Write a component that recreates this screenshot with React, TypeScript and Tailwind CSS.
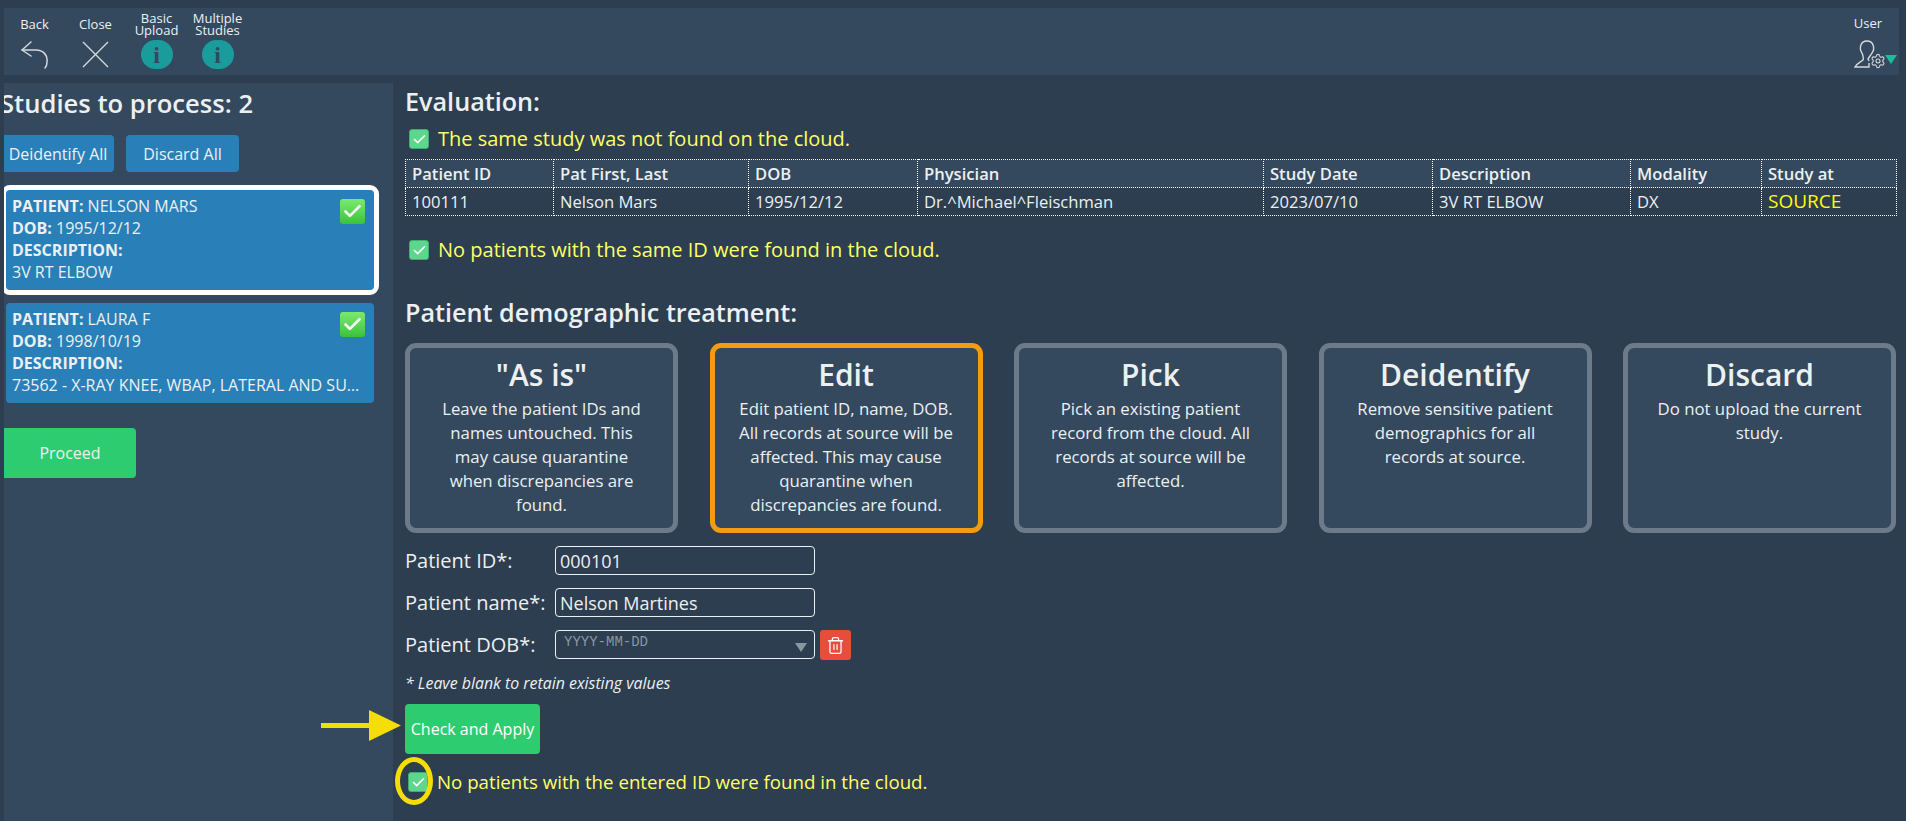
import { Check, Settings, Trash2 } from "lucide-react";

const columns = [
  { head: "Patient ID", value: "100111", width: "w-[148px]" },
  { head: "Pat First, Last", value: "Nelson Mars", width: "w-[195px]" },
  { head: "DOB", value: "1995/12/12", width: "w-[169px]" },
  { head: "Physician", value: "Dr.^Michael^Fleischman", width: "w-[346px]" },
  { head: "Study Date", value: "2023/07/10", width: "w-[169px]" },
  { head: "Description", value: "3V RT ELBOW", width: "w-[198px]" },
  { head: "Modality", value: "DX", width: "w-[131px]" },
  { head: "Study at", value: "SOURCE", width: "w-[135px]" },
];

const options = [
  {
    title: '"As is"',
    text: "Leave the patient IDs and\nnames untouched. This\nmay cause quarantine\nwhen discrepancies are\nfound.",
  },
  {
    title: "Edit",
    text: "Edit patient ID, name, DOB. All records at source will be affected. This may cause quarantine when discrepancies are found.",
    active: true,
  },
  {
    title: "Pick",
    text: "Pick an existing patient record from the cloud. All records at source will be affected.",
  },
  {
    title: "Deidentify",
    text: "Remove sensitive patient\ndemographics for all\nrecords at source.",
  },
  { title: "Discard", text: "Do not upload the current study." },
];

const InfoIcon = () => (
  <div className="w-8 h-[29px] rounded-full bg-[#1a9c9c] flex items-center justify-center font-['Liberation_Serif',serif] font-bold text-[24px] leading-none text-[#34495e]">
    i
  </div>
);

const ToolItem = ({ label, children }: { label: React.ReactNode; children: React.ReactNode }) => (
  <div className="w-[61px] flex flex-col items-center">
    <div className="h-6 flex items-center text-center text-[13px] leading-[12px] whitespace-nowrap text-[#ecf0f1]">{label}</div>
    <div className="mt-1 h-[29px] flex items-center justify-center">{children}</div>
  </div>
);

const GreenCheck = () => (
  <div className="w-[25px] h-[25px] rounded-[3px] bg-gradient-to-b from-[#7bea6f] to-[#38c23c] flex items-center justify-center">
    <Check size={21} strokeWidth={3.2} className="text-[#f2f5f2]" />
  </div>
);

const TinyCheck = () => (
  <div className="w-5 h-5 shrink-0 rounded-[3px] bg-[#5fd68e] border border-[#3fae6e] flex items-center justify-center">
    <Check size={15} strokeWidth={2.5} className="text-white" />
  </div>
);

const StudyCard = ({ name, dob, desc, selected }: { name: string; dob: string; desc: string; selected?: boolean }) => (
  <div
    className={`relative bg-[#2980b9] rounded-[4px] h-[100px] w-[368px] px-[6px] pt-[5px] text-[16px] leading-[22px] text-[#ecf0f1] ${
      selected ? "outline-[5px] outline outline-white" : ""
    }`}
  >
    <div>
      <span className="font-bold">PATIENT:</span> {name}
    </div>
    <div>
      <span className="font-bold">DOB:</span> {dob}
    </div>
    <div className="font-bold">DESCRIPTION:</div>
    <div className="truncate">{desc}</div>
    <div className="absolute right-[9px] top-[9px]">
      <GreenCheck />
    </div>
  </div>
);

const Field = ({ label, children }: { label: string; children: React.ReactNode }) => (
  <div className="flex items-center h-[29px]">
    <div className="w-[150px] text-[20px] whitespace-nowrap text-[#ecf0f1]">{label}</div>
    {children}
  </div>
);

export default function App() {
  return (
    <div className="h-screen overflow-hidden bg-[#2c3e50] font-['Open_Sans',sans-serif] pt-2 pl-1 pr-[7px]">
      {/* Barra superior */}
      <div className="h-[67px] bg-[#34495e] flex justify-between pt-1">
        <div className="flex">
          <ToolItem label="Back">
            <svg width="28" height="28" viewBox="0 0 28 28" fill="none" stroke="#d5d9dc" strokeWidth="1.5" strokeLinecap="round" strokeLinejoin="round">
              <path d="M10 1 L1 9 L10 15" />
              <path d="M1 9 H15 C22 9 27 14 26 21 C26 24 25 26 24 27" />
            </svg>
          </ToolItem>
          <ToolItem label="Close">
            <svg width="27" height="27" viewBox="0 0 27 27" fill="none" stroke="#d5d9dc" strokeWidth="1.4">
              <path d="M1 1 L26 26 M26 1 L1 26" />
            </svg>
          </ToolItem>
          <ToolItem label={<span>Basic<br />Upload</span>}>
            <InfoIcon />
          </ToolItem>
          <ToolItem label={<span>Multiple<br />Studies</span>}>
            <InfoIcon />
          </ToolItem>
        </div>
        <div className="w-[50px] flex flex-col items-center">
          <div className="h-6 mr-[12px] flex items-center text-[13px] text-[#ecf0f1]">User</div>
          <div className="relative mt-1 h-[29px] w-[50px]">
            <svg width="26" height="28" viewBox="0 0 26 28" fill="none" stroke="#d5d9dc" strokeWidth="1.4" className="absolute left-[5px] top-0">
              <path d="M8 13 C5 9 6 1 13 1 C20 1 21 9 18 13 C17 15 15 17 14 19 L15 21" />
              <path d="M8 13 C9 16 10 18 9 20 C7 22 3 23 1 27 H15 V23" />
            </svg>
            <Settings size={16} strokeWidth={1.6} className="absolute left-[21px] top-[13px] text-[#d5d9dc]" />
            <div className="absolute left-[36px] top-[15px] w-0 h-0 border-x-[6px] border-x-transparent border-t-[9px] border-t-[#1abc9c]" />
          </div>
        </div>
      </div>

      <div className="flex mt-2 h-[738px]">
        {/* Panel izquierdo */}
        <div className="w-[389px] shrink-0 bg-[#34495e] overflow-hidden">
          <h2 className="-ml-1 mt-[3px] text-[25.6px] leading-[36px] font-semibold whitespace-nowrap text-[#ecf0f1]">Studies to process: 2</h2>
          <div className="flex gap-3 mt-[13px] -ml-[2px]">
            <button className="w-[112px] h-[37px] bg-[#2980b9] rounded-r-[4px] text-[16px] text-[#ecf0f1]">Deidentify All</button>
            <button className="w-[113px] h-[37px] bg-[#2980b9] rounded-[4px] text-[16px] text-[#ecf0f1]">Discard All</button>
          </div>
          <div className="flex flex-col gap-[13px] mt-[18px] ml-[2px]">
            <StudyCard selected name="NELSON MARS" dob="1995/12/12" desc="3V RT ELBOW" />
            <StudyCard name="LAURA F" dob="1998/10/19" desc="73562 - X-RAY KNEE, WBAP, LATERAL AND SUNRISE" />
          </div>
          <button className="mt-[25px] w-[132px] h-[50px] bg-[#2ecc71] rounded-r-[4px] text-[16px] text-[#ecf0f1]">Proceed</button>
        </div>

        {/* Contenido */}
        <div className="relative flex-1 pl-3">
          <h2 className="text-[25.2px] leading-[36px] font-semibold text-[#ecf0f1]">Evaluation:</h2>
          <div className="flex items-center gap-[9px] ml-1 mt-[10px] h-5 text-[20px] text-[#ffff66]">
            <TinyCheck />
            The same study was not found on the cloud.
          </div>
          <table className="mt-[10px] w-[1491px] table-fixed border-collapse text-[16.6px] leading-[27px] text-[#ecf0f1]">
            <thead>
              <tr className="bg-[#34495e]">
                {columns.map((c) => (
                  <th key={c.head} className={`${c.width} border border-dotted border-white px-[6px] py-0 text-left font-semibold`}>
                    {c.head}
                  </th>
                ))}
              </tr>
            </thead>
            <tbody>
              <tr>
                {columns.map((c) => (
                  <td
                    key={c.head}
                    className={`border border-dotted border-white px-[6px] py-0 ${c.head === "Study at" ? "text-[19px] text-[#ffff00]" : ""}`}
                  >
                    {c.value}
                  </td>
                ))}
              </tr>
            </tbody>
          </table>
          <div className="flex items-center gap-[9px] ml-1 mt-[24px] h-5 text-[20px] text-[#ffff66]">
            <TinyCheck />
            No patients with the same ID were found in the cloud.
          </div>

          <h2 className="mt-[34px] text-[25.2px] leading-[36px] font-semibold text-[#ecf0f1]">Patient demographic treatment:</h2>
          <div className="flex gap-[31.5px] mt-[13px]">
            {options.map((o) => (
              <div
                key={o.title}
                className={`w-[273px] h-[190px] shrink-0 rounded-[11px] border-[5px] bg-[#34495e] px-[18px] pt-[5px] text-center text-[#ecf0f1] ${
                  o.active ? "border-[#f39c12]" : "border-[#6c7a89]"
                }`}
              >
                <div className="text-[30px] leading-[44px] font-semibold">{o.title}</div>
                <div className="text-[16.8px] leading-[24px] whitespace-pre-line">{o.text}</div>
              </div>
            ))}
          </div>

          {/* Formulario */}
          <div className="flex flex-col gap-[13px] mt-[13px]">
            <Field label="Patient ID*:">
              <input
                readOnly
                value="000101"
                className="w-[260px] h-[29px] rounded-[4px] border border-[#ecf0f1] bg-transparent px-1 text-[18px] text-[#ecf0f1]"
              />
            </Field>
            <Field label="Patient name*:">
              <input
                readOnly
                value="Nelson Martines"
                className="w-[260px] h-[29px] rounded-[4px] border border-[#ecf0f1] bg-transparent px-1 text-[18px] text-[#ecf0f1]"
              />
            </Field>
            <Field label="Patient DOB*:">
              <div className="relative w-[260px] h-[29px] rounded-[4px] border border-[#ecf0f1] pl-2 font-['Liberation_Mono',monospace] text-[14px] leading-[22px] text-[#8a97a3]">
                YYYY-MM-DD
                <div className="absolute right-[7px] top-[12px] w-0 h-0 border-x-[6px] border-x-transparent border-t-[9px] border-t-[#8a97a3]" />
              </div>
              <button className="ml-[5px] mt-[1px] w-[31px] h-[30px] rounded-[3px] bg-[#e74c3c] flex items-center justify-center">
                <Trash2 size={19} strokeWidth={1.6} className="text-white" />
              </button>
            </Field>
          </div>
          <p className="mt-[14px] text-[15.9px] leading-[20px] italic text-[#ecf0f1]">* Leave blank to retain existing values</p>
          <button className="block mt-[11px] w-[135px] h-[50px] rounded-[4px] bg-[#2ecc71] text-[16px] text-white whitespace-nowrap">Check and Apply</button>
          <div className="flex items-center gap-[9px] ml-[3px] mt-[18px] h-5 text-[18.7px] text-[#ffff66]">
            <TinyCheck />
            No patients with the entered ID were found in the cloud.
          </div>

          {/* Anotaciones */}
          <svg width="80" height="32" viewBox="0 0 80 32" className="absolute left-[-72px] top-[627px]">
            <path d="M0 13 H48 V0 L80 15.5 L48 31 V18 H0 Z" fill="#f5de05" />
          </svg>
          <div className="absolute left-[2px] top-[674px] w-[38px] h-[48px] rounded-[50%] border-[5px] border-[#f5de05]" />
        </div>
      </div>
    </div>
  );
}
